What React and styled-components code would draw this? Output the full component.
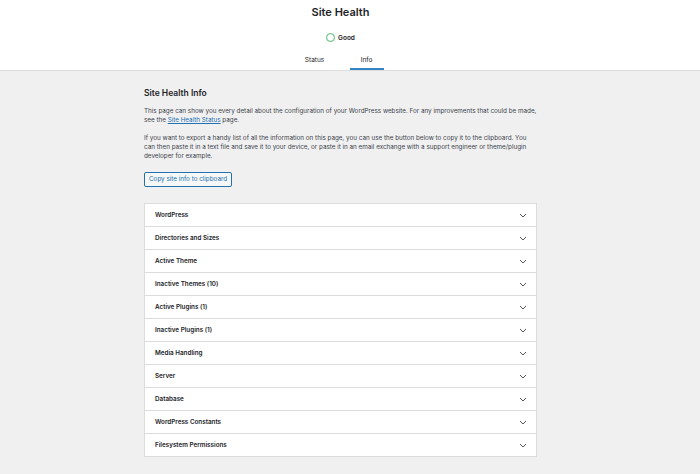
import React from 'react';
import styled, { createGlobalStyle } from 'styled-components';

const GlobalStyle = createGlobalStyle`
  html, body {
    margin: 0;
    padding: 0;
    background: #f0f0f1;
    font-family: Inter, "Liberation Sans", Arial, sans-serif;
    color: #1d2327;
  }
`;

// the reference is centred on a 681px wide area (hidden scrollbar on the right)
const Header = styled('div')`
  background: #fff;
  border-bottom: 1px solid #dcdcde;
  display: flex;
  flex-direction: column;
  align-items: center;
  height: 71px;
  padding-right: 19px;
  box-sizing: border-box;
`;

const Title = styled('h1')`
  margin: 5px 0 0;
  font-size: 11px;
  font-weight: 600;
  line-height: 14px;
`;

const Rating = styled('div')`
  display: flex;
  align-items: center;
  gap: 3px;
  margin-top: 14px;
  font-size: 6.5px;
  font-weight: 600;
  color: #1d2327;
`;

const Circle = styled('span')`
  width: 7px;
  height: 7px;
  border-radius: 50%;
  border: 1.5px solid #4ab866;
`;

const Tabs = styled('nav')`
  display: flex;
  margin-top: 7px;
`;

const Tab = styled('a')`
  display: block;
  width: 34px;
  padding: 7px 0 4px;
  margin: 0 9px;
  text-align: center;
  font-size: 6.5px;
  line-height: 8px;
  color: #1d2327;
  border-bottom: 2px solid ${p => (p.$active ? '#3582c4' : 'transparent')};
`;

const Content = styled('div')`
  padding-right: 19px;
`;

const Main = styled('div')`
  width: 393px;
  margin: 0 auto;
  padding-top: 17px;
`;

const Heading = styled('h2')`
  margin: 0 0 9px;
  font-size: 8.5px;
  font-weight: 600;
  line-height: 10px;
`;

const Para = styled('p')`
  margin: 0 0 9px;
  font-size: 6.3px;
  line-height: 9px;
  color: #3c434a;
`;

const Link = styled('a')`
  color: #2271b1;
  text-decoration: underline;
`;

const CopyButton = styled('button')`
  display: block;
  margin-top: 11px;
  height: 15px;
  padding: 0 4px;
  border: 1px solid #2271b1;
  border-radius: 2px;
  background: #f6f7f7;
  color: #2271b1;
  font-family: inherit;
  font-size: 6.3px;
  line-height: 13px;
`;

const Accordion = styled('div')`
  margin-top: 16px;
  background: #fff;
  border: 1px solid #dcdcde;
`;

const Row = styled('div')`
  display: flex;
  align-items: center;
  justify-content: space-between;
  height: 22px;
  padding: 0 9px 0 10px;
  border-top: ${p => (p.$first ? 'none' : '1px solid #dcdcde')};
  font-size: 6.3px;
  font-weight: 600;
  color: #1d2327;
`;

const Chevron = () => (
  <svg width="8" height="5" viewBox="0 0 8 5" fill="none">
    <path d="M1 1l3 3 3-3" stroke="#50575e" strokeWidth="1" />
  </svg>
);

const sections = [
  'WordPress',
  'Directories and Sizes',
  'Active Theme',
  'Inactive Themes (10)',
  'Active Plugins (1)',
  'Inactive Plugins (1)',
  'Media Handling',
  'Server',
  'Database',
  'WordPress Constants',
  'Filesystem Permissions',
];

export default function App() {
  return (
    <>
      <GlobalStyle />
      <Header>
        <Title>Site Health</Title>
        <Rating>
          <Circle />
          Good
        </Rating>
        <Tabs>
          <Tab>Status</Tab>
          <Tab $active>Info</Tab>
        </Tabs>
      </Header>
      <Content>
        <Main>
          <Heading>Site Health Info</Heading>
          <Para>
            This page can show you every detail about the configuration of your WordPress website. For any improvements that could be made, see the <Link>Site Health Status</Link> page.
          </Para>
          <Para>
            If you want to export a handy list of all the information on this page, you can use the button below to copy it to the clipboard. You can then paste it in a text file and save it to your device, or paste it in an email exchange with a support engineer or theme/plugin developer for example.
          </Para>
          <CopyButton>Copy site info to clipboard</CopyButton>
          <Accordion>
            {sections.map((s, i) => (
              <Row key={s} $first={i === 0}>
                {s}
                <Chevron />
              </Row>
            ))}
          </Accordion>
        </Main>
      </Content>
    </>
  );
}
